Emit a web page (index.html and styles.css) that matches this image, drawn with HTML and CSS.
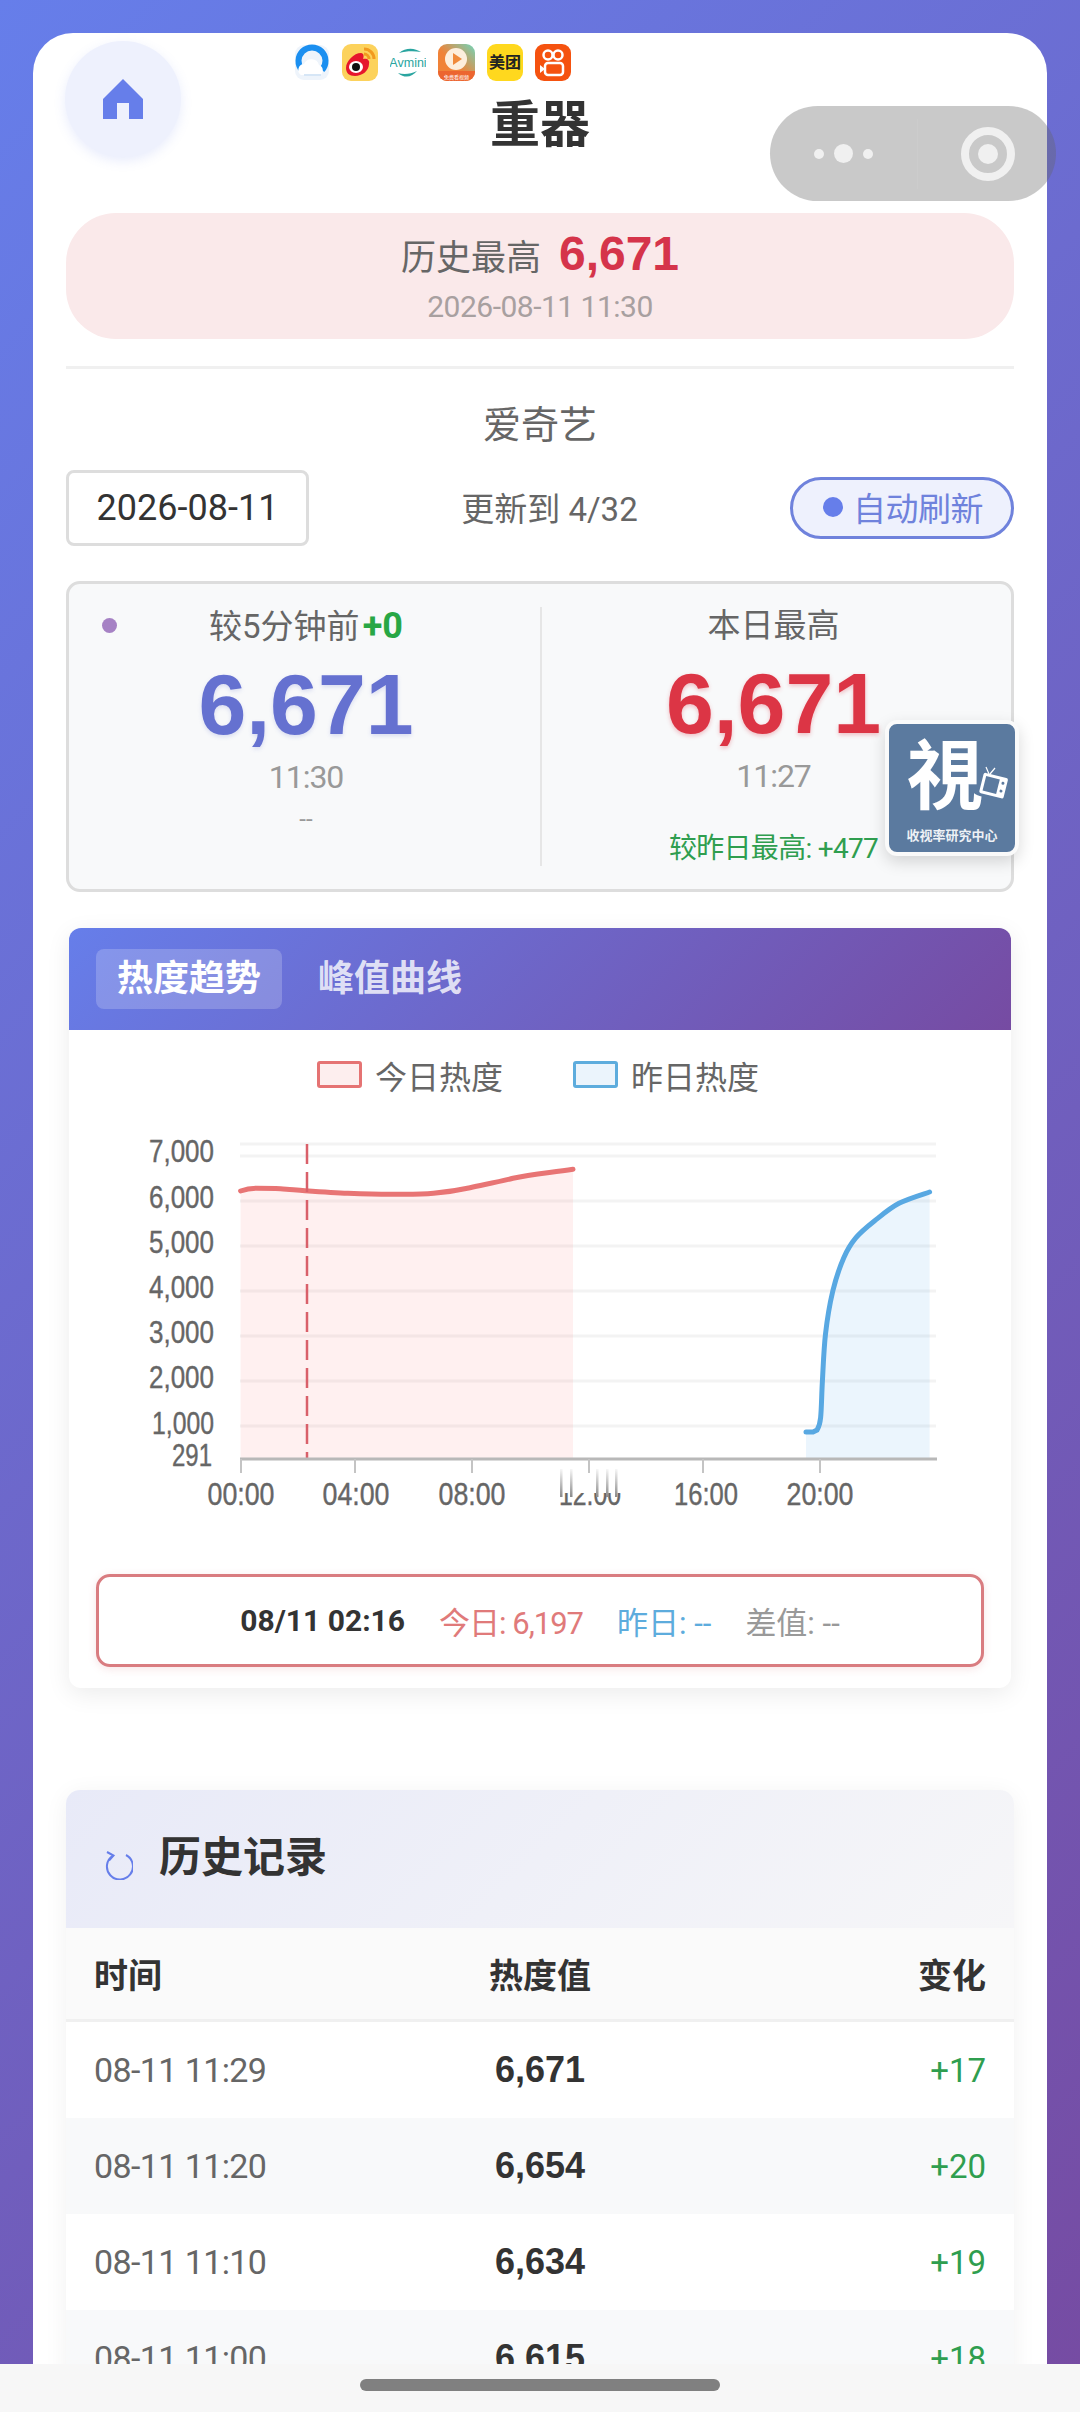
FILE: index.html
```html
<!DOCTYPE html>
<html lang="zh-CN">
<head>
    <meta charset="UTF-8">
    <meta name="viewport" content="width=device-width, initial-scale=1.0">
    <title>重器</title>
    <link rel="stylesheet" href="styles.css">
</head>
<body>

<div class="page-card">

    <!-- Header -->
    <div class="header">
        <h1 class="title">重器</h1>
    </div>

    <div class="record-banner">
        <div class="record-line">
            <span class="record-label">历史最高</span>
            <span class="record-value">6,671</span>
        </div>
        <div class="record-date">2026-08-11 11:30</div>
    </div>

    <div class="divider"></div>

    <div class="site-name">爱奇艺</div>

    <!-- Date / refresh -->
    <div class="controls">
        <div class="date-input">2026-08-11</div>
        <div class="update-text">更新到 4/32</div>
        <div class="refresh-btn"><span class="refresh-dot"></span>自动刷新</div>
    </div>

    <!-- Stats -->
    <div class="stats">
        <span class="live-dot"></span>
        <div class="stat-col stat-left">
            <div class="stat-label">较5分钟前<b class="up-bold">+0</b></div>
            <div class="stat-value blue">6,671</div>
            <div class="stat-time">11:30</div>
            <div class="stat-dash">--</div>
        </div>
        <div class="stat-col stat-right">
            <div class="stat-label">本日最高</div>
            <div class="stat-value red">6,671</div>
            <div class="stat-time">11:27</div>
            <div class="stat-compare">较昨日最高: +477</div>
        </div>
    </div>

    <!-- Chart -->
    <div class="chart-card">
        <div class="chart-tabs">
            <div class="tab active">热度趋势</div>
            <div class="tab">峰值曲线</div>
        </div>
        <div class="legend">
            <div class="legend-item"><span class="legend-box today"></span>今日热度</div>
            <div class="legend-item"><span class="legend-box yesterday"></span>昨日热度</div>
        </div>
        <svg class="chart" width="942" height="440" viewBox="69 1120 942 440">
            <defs>
                <linearGradient id="smear" gradientUnits="userSpaceOnUse" x1="0" y1="1466" x2="0" y2="1496">
                    <stop offset="0" stop-color="#fff"/>
                    <stop offset="1" stop-color="#8a8a8a"/>
                </linearGradient>
            </defs>
            <g stroke="#f3f3f3" stroke-width="3">
                <line x1="240" x2="936" y1="1143" y2="1143"/>
                <line x1="240" x2="936" y1="1155" y2="1155"/>
                <line x1="240" x2="936" y1="1200" y2="1200"/>
                <line x1="240" x2="936" y1="1245" y2="1245"/>
                <line x1="240" x2="936" y1="1290" y2="1290"/>
                <line x1="240" x2="936" y1="1335" y2="1335"/>
                <line x1="240" x2="936" y1="1380" y2="1380"/>
                <line x1="240" x2="936" y1="1425" y2="1425"/>
            </g>
            <path fill="#ff6b6b" fill-opacity="0.1" d="M240.6 1190 C246 1188 250 1187.3 256 1187.3 S272 1187.3 280.5 1187.7 S295 1189 305 1189.7 S335 1191.8 347.8 1192.3 S380 1193.4 393.7 1193.3 S420 1193.6 433.5 1192.3 S455 1190 470 1186.7 S495 1181.5 513 1177.3 S548 1172 573 1168.3 V1458 H240.6 Z"/>
            <path fill="#3a9ae8" fill-opacity="0.1" d="M806 1431 L813 1431 L817 1429 C818.3 1426.6 819.7 1424.9 820.6 1416.7 C821.5 1408.5 821.6 1393.9 822.4 1380 C823.2 1366.1 823.8 1348 825.5 1333 C827.2 1318 829.8 1302.7 832.8 1290 C835.9 1277.3 839.9 1265.6 843.8 1256.7 C847.7 1247.8 850.9 1242.8 856 1236.7 C861.1 1230.6 867.2 1225.7 874.4 1220 C881.6 1214.3 889.8 1207.1 899 1202.3 C908.2 1197.5 924.6 1192.8 929.6 1191 V1458 H806 Z"/>
            <path fill="none" stroke="#e87474" stroke-width="5" stroke-linecap="round" d="M240.6 1190 C246 1188 250 1187.3 256 1187.3 S272 1187.3 280.5 1187.7 S295 1189 305 1189.7 S335 1191.8 347.8 1192.3 S380 1193.4 393.7 1193.3 S420 1193.6 433.5 1192.3 S455 1190 470 1186.7 S495 1181.5 513 1177.3 S548 1172 573 1168.3"/>
            <path fill="none" stroke="#58a8e2" stroke-width="5" stroke-linecap="round" d="M806 1431 L813 1431 L817 1429 C818.3 1426.6 819.7 1424.9 820.6 1416.7 C821.5 1408.5 821.6 1393.9 822.4 1380 C823.2 1366.1 823.8 1348 825.5 1333 C827.2 1318 829.8 1302.7 832.8 1290 C835.9 1277.3 839.9 1265.6 843.8 1256.7 C847.7 1247.8 850.9 1242.8 856 1236.7 C861.1 1230.6 867.2 1225.7 874.4 1220 C881.6 1214.3 889.8 1207.1 899 1202.3 C908.2 1197.5 924.6 1192.8 929.6 1191"/>
            <line x1="307" x2="307" y1="1143" y2="1458" stroke="#d9606a" stroke-width="2.5" stroke-dasharray="20 8"/>
            <line x1="240" x2="937" y1="1458" y2="1458" stroke="#b8b8b8" stroke-width="3"/>
            <g stroke="#c4c4c4" stroke-width="2">
                <line x1="241" x2="241" y1="1458" y2="1472"/>
                <line x1="355" x2="355" y1="1458" y2="1472"/>
                <line x1="472" x2="472" y1="1458" y2="1472"/>
                <line x1="589" x2="589" y1="1458" y2="1472"/>
                <line x1="703" x2="703" y1="1458" y2="1472"/>
                <line x1="820" x2="820" y1="1458" y2="1472"/>
            </g>
            <g class="axis-y" text-anchor="end">
                <text x="214" y="1161" textLength="65" lengthAdjust="spacingAndGlyphs">7,000</text>
                <text x="214" y="1207" textLength="65" lengthAdjust="spacingAndGlyphs">6,000</text>
                <text x="214" y="1252" textLength="65" lengthAdjust="spacingAndGlyphs">5,000</text>
                <text x="214" y="1297" textLength="65" lengthAdjust="spacingAndGlyphs">4,000</text>
                <text x="214" y="1342" textLength="65" lengthAdjust="spacingAndGlyphs">3,000</text>
                <text x="214" y="1387" textLength="65" lengthAdjust="spacingAndGlyphs">2,000</text>
                <text x="214" y="1433" textLength="62" lengthAdjust="spacingAndGlyphs">1,000</text>
                <text x="212" y="1465" textLength="40" lengthAdjust="spacingAndGlyphs">291</text>
            </g>
            <g class="axis-x" text-anchor="middle">
                <text x="241" y="1504" textLength="67" lengthAdjust="spacingAndGlyphs">00:00</text>
                <text x="356" y="1504" textLength="67" lengthAdjust="spacingAndGlyphs">04:00</text>
                <text x="472" y="1504" textLength="67" lengthAdjust="spacingAndGlyphs">08:00</text>
                <text x="590" y="1504" textLength="62" lengthAdjust="spacingAndGlyphs">12:00</text>
                <text x="706" y="1504" textLength="64" lengthAdjust="spacingAndGlyphs">16:00</text>
                <text x="820" y="1504" textLength="67" lengthAdjust="spacingAndGlyphs">20:00</text>
            </g>
            <!-- smeared top of the 12:00 label -->
            <rect x="557" y="1473" width="66" height="19" fill="#fff"/>
            <g fill="url(#smear)">
                <rect x="560" y="1468" width="2.5" height="28"/>
                <rect x="570" y="1468" width="2.5" height="28"/>
                <rect x="596" y="1468" width="2.5" height="28"/>
                <rect x="606" y="1468" width="2.5" height="28"/>
                <rect x="615" y="1468" width="2.5" height="28"/>
            </g>
        </svg>
        <div class="tooltip">
            <span class="tip-time">08/11 02:16</span>
            <span class="tip-today">今日: 6,197</span>
            <span class="tip-yesterday">昨日: --</span>
            <span class="tip-diff">差值: --</span>
        </div>
    </div>

    <!-- History -->
    <div class="history">
        <div class="history-head">
            <svg class="history-icon" width="30" height="30" viewBox="0 0 30 30">
                <path d="M10 5.5 A13 13 0 1 0 23 5" fill="none" stroke="#667eea" stroke-width="2"/>
                <path d="M4 2 L10.5 5.5 L6 10.5" fill="none" stroke="#667eea" stroke-width="2"/>
            </svg>
            <span class="history-title">历史记录</span>
        </div>
        <div class="row row-head">
            <div>时间</div>
            <div class="mid">热度值</div>
            <div class="end">变化</div>
        </div>
        <div class="row">
            <div class="cell-time">08-11 11:29</div>
            <div class="mid cell-value">6,671</div>
            <div class="end cell-up">+17</div>
        </div>
        <div class="row even">
            <div class="cell-time">08-11 11:20</div>
            <div class="mid cell-value">6,654</div>
            <div class="end cell-up">+20</div>
        </div>
        <div class="row">
            <div class="cell-time">08-11 11:10</div>
            <div class="mid cell-value">6,634</div>
            <div class="end cell-up">+19</div>
        </div>
        <div class="row even">
            <div class="cell-time">08-11 11:00</div>
            <div class="mid cell-value">6,615</div>
            <div class="end cell-up">+18</div>
        </div>
    </div>
</div>

<!-- Home button -->
<div class="home-btn">
    <svg width="40" height="40" viewBox="0 0 40 40">
        <path d="M20 0 L40 20 V40 H26 V24 H14 V40 H0 V20 Z" fill="#667eea"/>
    </svg>
</div>

<!-- Recent apps strip -->
<div class="app-strip">
    <svg class="app" width="36" height="38" viewBox="0 0 36 38">
        <rect x="1" y="2" width="34" height="35" rx="9" fill="#eef4fb"/>
        <path d="M8 27 A13.5 13.5 0 1 1 28 27" fill="none" stroke="#1b8ff0" stroke-width="6"/>
        <path d="M7 32 a6 6 0 0 1 3 -11 a8 8 0 0 1 15 1 a5.5 5.5 0 0 1 1 10 Z" fill="#fff"/>
        <path d="M10 32 H27" stroke="#d6e6f6" stroke-width="2"/>
    </svg>
    <svg class="app" width="36" height="37" viewBox="0 0 36 37">
        <rect width="36" height="37" rx="9" fill="#fcd25c"/>
        <path d="M22 5 A10 10 0 0 1 32 15 M22 10 A5 5 0 0 1 27 15" fill="none" stroke="#f29a1f" stroke-width="3"/>
        <path d="M4 24 C4 17 12 9 19 9 C22 9 22 13 21 15 C25 14 28 16 27 20 C27 27 20 32 13 32 C7 32 4 29 4 24 Z" fill="#e6162d"/>
        <ellipse cx="14" cy="23" rx="7" ry="6" fill="#fff"/>
        <circle cx="14" cy="23" r="4" fill="#111"/>
    </svg>
    <svg class="app" width="36" height="37" viewBox="0 0 36 37">
        <path d="M9 9 C16 3 25 4 31 8 C24 7 16 7 9 9 Z" fill="#2aa5a0"/>
        <text class="app-avmini" x="18" y="23" text-anchor="middle">Avmini</text>
        <path d="M8 29 C15 35 22 33 27 27 C21 30 14 31 8 29 Z" fill="#2aa5a0"/>
    </svg>
    <svg class="app" width="37" height="37" viewBox="0 0 37 37">
        <defs>
            <linearGradient id="videoBg" x1="0" y1="1" x2="1" y2="0">
                <stop offset="0.45" stop-color="#f08238"/>
                <stop offset="1" stop-color="#6fd6bb"/>
            </linearGradient>
        </defs>
        <rect width="37" height="37" rx="9" fill="url(#videoBg)"/>
        <path d="M0 27 H37 V28 A9 9 0 0 1 28 37 H9 A9 9 0 0 1 0 28 Z" fill="#ec6530"/>
        <circle cx="18" cy="15" r="11" fill="#fdeedd"/>
        <path d="M15 9 L24 15 L15 21 Z" fill="#f08a3c"/>
        <text class="app-tiny" x="18.5" y="34.5" text-anchor="middle">免费看视频</text>
    </svg>
    <div class="app app-meituan">美团</div>
    <svg class="app" width="36" height="37" viewBox="0 0 36 37">
        <rect width="36" height="37" rx="9" fill="#f5520f"/>
        <circle cx="13" cy="11" r="4.5" fill="none" stroke="#fff" stroke-width="2.5"/>
        <circle cx="23" cy="11" r="4.5" fill="none" stroke="#fff" stroke-width="2.5"/>
        <rect x="10" y="19" width="18" height="12" rx="3" fill="none" stroke="#fff" stroke-width="2.5"/>
        <path d="M10 25 L5 21 V29 Z" fill="#fff"/>
    </svg>
</div>

<!-- Mini program capsule -->
<div class="capsule">
    <div class="capsule-dots">
        <span class="cap-dot"></span>
        <span class="cap-dot big"></span>
        <span class="cap-dot"></span>
    </div>
    <div class="capsule-sep"></div>
    <div class="capsule-close"><span></span></div>
</div>

<!-- Floating badge -->
<div class="float-badge">
    <div class="badge-char">視</div>
    <svg class="badge-tv" width="30" height="34" viewBox="0 0 30 34">
        <path d="M11 8 L8 1 M12 8 L17 2" stroke="#fff" stroke-width="1.2" fill="none"/>
        <g transform="rotate(14 15 20)">
            <rect x="3" y="9" width="25" height="21" rx="2" fill="#fff"/>
            <rect x="6" y="12" width="14" height="15" fill="#5b7a9f"/>
            <circle cx="24" cy="15" r="1.5" fill="#5b7a9f"/>
            <circle cx="24" cy="23" r="1.5" fill="#5b7a9f"/>
        </g>
    </svg>
    <div class="badge-label">收视率研究中心</div>
</div>

<!-- Gesture bar -->
<div class="bottom-bar"><div class="handle"></div></div>

</body>
</html>
```

FILE: styles.css
```css
html, body { margin: 0; height: 2412px; overflow: hidden; }
body { position: relative; box-sizing: border-box; padding: 33px 33px 0; background: linear-gradient(135deg, #667eea 0%, #764ba2 100%); font-family: Roboto, "Noto Sans CJK SC", sans-serif; color: #333; }

.page-card { height: 2379px; box-sizing: border-box; padding: 0 33px; background: #fff; border-radius: 40px 40px 0 0; overflow: hidden; }

.header { height: 180px; box-sizing: border-box; padding-top: 65px; text-align: center; }
.title { margin: 0; font-size: 50px; line-height: 54px; font-weight: 700; color: #333; }

.record-banner { height: 126px; box-sizing: border-box; padding-top: 12px; background: #fae9ea; border-radius: 50px; text-align: center; }
.record-line { display: flex; justify-content: center; align-items: center; gap: 18px; height: 56px; }
.record-label { margin-top: 3px; font-size: 35px; color: #666; }
.record-value { font-family: "Liberation Sans", sans-serif; font-size: 48px; font-weight: 700; color: #d5344a; }
.record-date { margin-top: 8px; font-size: 30px; line-height: 36px; letter-spacing: -0.5px; color: #a8a0a0; }

.divider { height: 3px; margin-top: 27px; background: #f0f0f0; }

.site-name { margin-top: 31px; font-size: 38px; line-height: 50px; text-align: center; color: #666; }

.controls { display: flex; justify-content: space-between; align-items: center; height: 76px; margin-top: 20px; }
.date-input { width: 243px; height: 76px; box-sizing: border-box; border: 3px solid #ddd; border-radius: 8px; font-size: 36px; line-height: 70px; text-align: center; color: #333; }
.update-text { margin-bottom: 3px; font-size: 33px; color: #666; }
.refresh-btn { display: flex; align-items: center; width: 224px; height: 62px; box-sizing: border-box; padding: 0 0 2px 30px; border: 3px solid #6f82dc; border-radius: 31px; background: #eef1fd; font-size: 33px; letter-spacing: -0.5px; color: #6f82dc; }
.refresh-dot { width: 20px; height: 20px; margin-right: 10px; border-radius: 50%; background: #667eea; }

.stats { position: relative; display: grid; grid-template-columns: 1fr 1fr; height: 311px; box-sizing: border-box; margin-top: 35px; padding: 23px 0; border: 3px solid #ddd; border-radius: 14px; background: #f8f9fa; }
.live-dot { position: absolute; left: 33px; top: 34px; width: 15px; height: 15px; border-radius: 50%; background: #a682c4; }
.stat-col { text-align: center; }
.stat-left { padding-left: 3px; }
.stat-right { padding-right: 6px; border-left: 2px solid #e6e6e6; }
.stat-label { font-size: 33px; line-height: 34px; margin-top: 2px; color: #666; }
.up-bold { margin-left: 3px; font-size: 36px; color: #28a745; }
.stat-value { margin-top: 15px; font-family: "Liberation Sans", sans-serif; font-size: 86px; line-height: 90px; font-weight: 700; }
.stat-value.blue { color: #6571d0; text-shadow: 0 2px 4px rgba(95, 109, 204, 0.2); }
.stat-value.red { color: #dc3545; text-shadow: 0 2px 4px rgba(220, 53, 69, 0.3); }
.stat-time { margin-top: 10px; font-size: 32px; line-height: 36px; letter-spacing: -1px; color: #999; }
.stat-dash { margin-top: 10px; font-size: 24px; line-height: 28px; color: #999; }
.stat-compare { margin-top: 38px; font-size: 28px; line-height: 34px; letter-spacing: -0.7px; color: #2f9e4f; }

.chart-card { height: 760px; margin: 36px 3px 0; border-radius: 12px; background: #fff; box-shadow: 0 6px 24px rgba(0, 0, 0, 0.08); }
.chart-tabs { display: flex; align-items: center; gap: 15px; height: 102px; box-sizing: border-box; padding-left: 27px; border-radius: 12px 12px 0 0; background: linear-gradient(135deg, #667eea 0%, #764ba2 100%); }
.tab { height: 60px; padding: 0 21px; border-radius: 8px; font-size: 36px; line-height: 60px; font-weight: 700; color: rgba(255, 255, 255, 0.8); }
.tab.active { background: rgba(255, 255, 255, 0.2); color: #fff; }

.legend { display: flex; justify-content: center; gap: 70px; height: 27px; margin-top: 31px; padding-right: 4px; }
.legend-item { display: flex; align-items: center; font-size: 32px; color: #666; }
.legend-box { width: 45px; height: 27px; box-sizing: border-box; margin-right: 13px; border: 3px solid; border-radius: 3px; }
.legend-box.today { border-color: #e57373; background: #fdeeee; }
.legend-box.yesterday { border-color: #5dacdd; background: #ebf4fc; }

.chart { display: block; margin-top: 33px; }
.axis-y text, .axis-x text { font-family: "Liberation Sans", sans-serif; font-size: 31px; fill: #666; stroke: #666; stroke-width: 0.4; }

.tooltip { display: flex; justify-content: center; align-items: center; gap: 34px; height: 93px; box-sizing: border-box; margin: 13px 27px 0; border: 3px solid #d97c80; border-radius: 14px; font-size: 31px; box-shadow: 0 2px 8px rgba(217, 124, 128, 0.2); }
.tip-time { font-size: 30px; font-weight: 700; color: #333; }
.tip-today { letter-spacing: -1px; color: #e07a7a; }
.tip-yesterday { color: #5dacdd; }
.tip-diff { color: #999; }

.history { margin-top: 102px; border-radius: 14px 14px 0 0; box-shadow: 0 4px 24px rgba(0, 0, 0, 0.06); }
.history-head { display: flex; align-items: center; height: 138px; box-sizing: border-box; padding-left: 37px; border-radius: 14px 14px 0 0; background: linear-gradient(135deg, #e8eaf8 0%, #f6f6f8 100%); }
.history-icon { margin: 12px 26px 0 0; }
.history-title { margin-top: -11px; font-size: 42px; font-weight: 700; color: #333; }

.row { display: grid; grid-template-columns: 1fr 1fr 1fr; align-items: center; height: 96px; padding: 0 28px; }
.row.even { background: #f8f9fa; }
.row-head { height: 94px; box-sizing: border-box; border-bottom: 3px solid #f0f0f0; background: #fafafa; font-size: 34px; font-weight: 700; color: #333; }
.mid { text-align: center; }
.end { text-align: right; }
.cell-time { font-size: 34px; letter-spacing: -0.6px; color: #666; }
.cell-value { font-family: "Liberation Sans", sans-serif; font-size: 36px; font-weight: 700; color: #333; }
.cell-up { font-size: 33px; color: #2f9e4f; }

/* overlays */
.home-btn { position: absolute; left: 65px; top: 41px; display: flex; justify-content: center; align-items: center; width: 116px; height: 116px; border-radius: 50%; background: #eef1fd; box-shadow: 0 4px 12px rgba(102, 126, 234, 0.15); }

.app-strip { position: absolute; left: 294px; top: 43px; display: flex; align-items: center; gap: 12px; height: 38px; }
.app { display: block; flex: none; }
.app-avmini { font-family: "Liberation Sans", sans-serif; font-size: 12.5px; fill: #2aa5a0; }
.app-meituan { width: 36px; height: 37px; border-radius: 9px; background: #ffd81e; font-size: 16px; line-height: 37px; font-weight: 700; text-align: center; color: #222; }
.app-tiny { font-size: 5px; fill: #fff; }

.capsule { position: absolute; left: 770px; top: 106px; display: flex; align-items: center; width: 286px; height: 95px; border-radius: 48px; background: rgba(100, 100, 100, 0.35); }
.capsule-dots { display: flex; justify-content: center; align-items: center; gap: 10px; width: 147px; }
.cap-dot { width: 10px; height: 10px; border-radius: 50%; background: #f0f0f0; }
.cap-dot.big { width: 19px; height: 19px; }
.capsule-sep { width: 1px; height: 70px; background: rgba(255, 255, 255, 0.06); }
.capsule-close { display: flex; justify-content: center; align-items: center; width: 54px; height: 54px; box-sizing: border-box; margin-left: 43px; border: 8px solid #f0f0f0; border-radius: 50%; }
.capsule-close span { width: 20px; height: 20px; border-radius: 50%; background: #f0f0f0; }

.float-badge { position: absolute; left: 885px; top: 720px; width: 134px; height: 136px; box-sizing: border-box; border: 4px solid #fafafa; border-radius: 12px; background: #5b7a9f; box-shadow: 0 6px 16px rgba(0, 0, 0, 0.15); color: #fff; text-align: center; }
.badge-char { margin-top: -2px; padding-right: 14px; font-family: "Noto Sans CJK JP", sans-serif; font-size: 76px; line-height: 96px; font-weight: 700; color: #fff; }
.badge-tv { position: absolute; right: 7px; top: 42px; }
.badge-label { position: absolute; left: 0; right: 0; top: 103px; font-size: 13px; line-height: 18px; font-weight: 700; color: #eef1f5; }

.bottom-bar { position: absolute; left: 0; right: 0; bottom: 0; height: 48px; background: #f7f7f7; }
.handle { width: 360px; height: 12px; margin: 15px auto 0; border-radius: 6px; background: #808080; }
```
